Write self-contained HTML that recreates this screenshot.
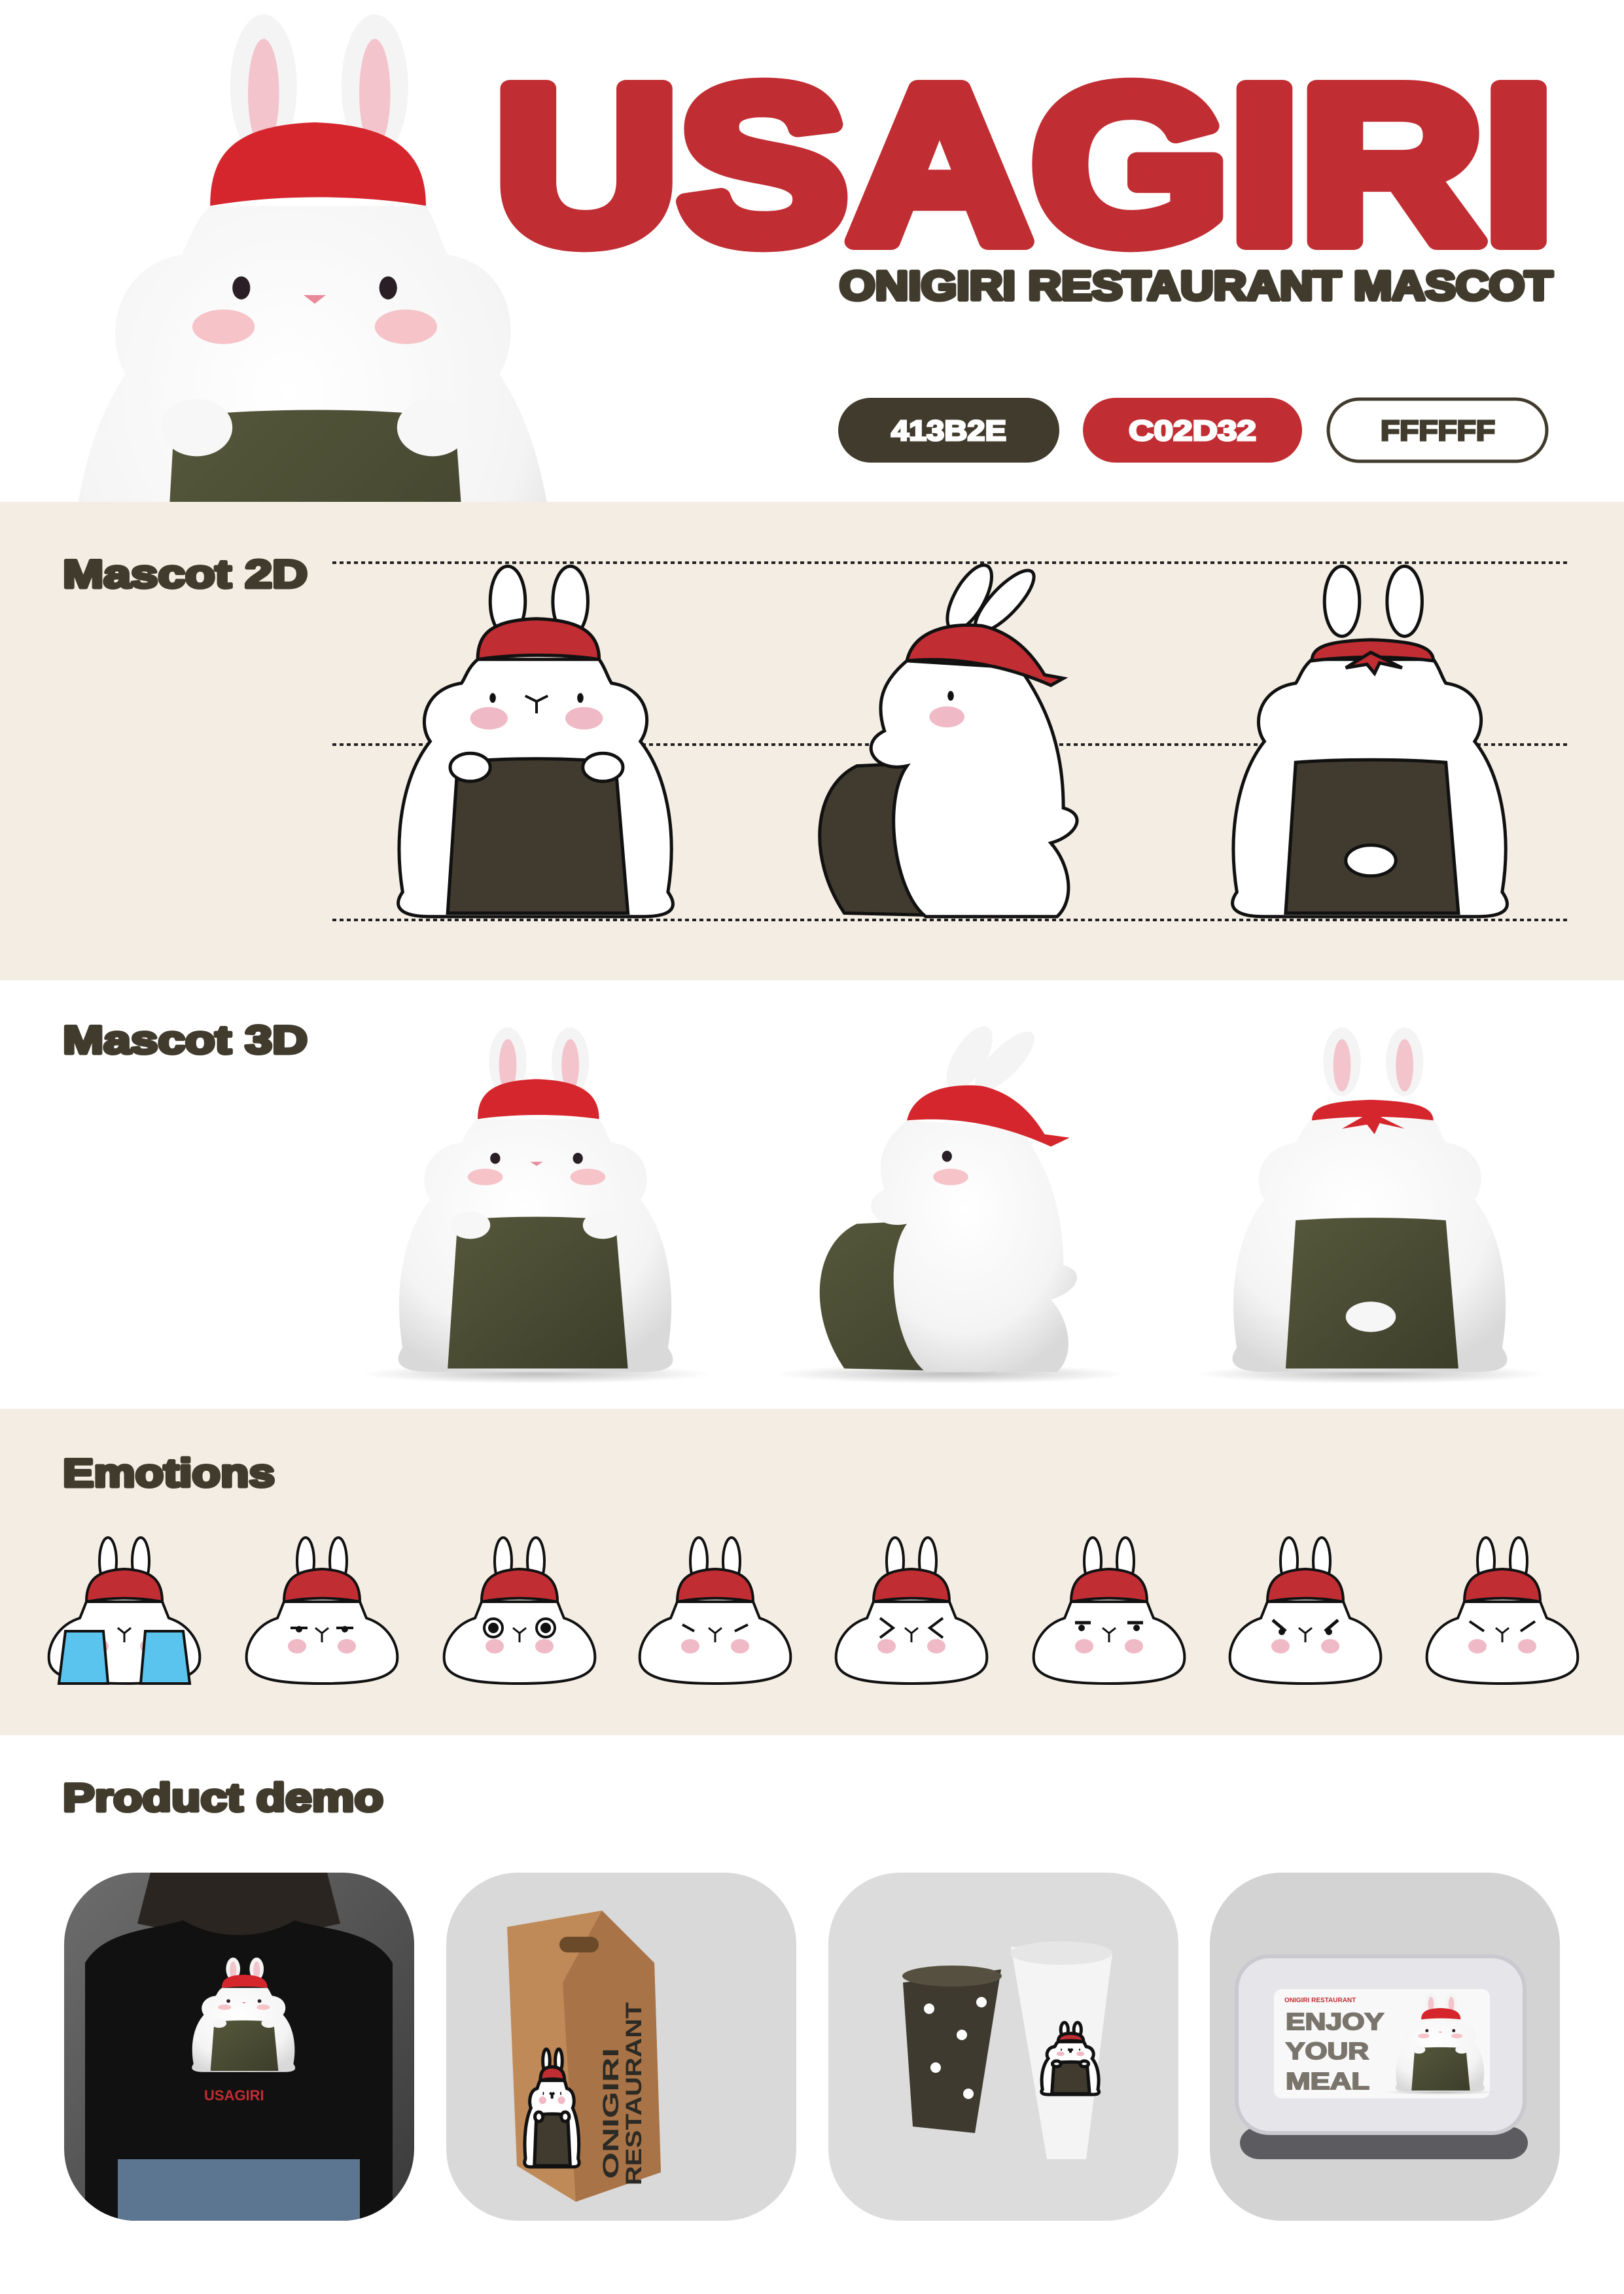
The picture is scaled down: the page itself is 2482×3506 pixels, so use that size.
<!DOCTYPE html>
<html><head><meta charset="utf-8"><style>
html,body{margin:0;padding:0;background:#fff}
svg{display:block}
text{font-family:"Liberation Sans",sans-serif;font-weight:bold}
</style></head><body>
<svg width="2482" height="3506" viewBox="0 0 2482 3506" xmlns="http://www.w3.org/2000/svg">
<defs>
<radialGradient id="w3d" cx="45%" cy="35%" r="70%"><stop offset="0" stop-color="#ffffff"/><stop offset="0.7" stop-color="#f4f4f4"/><stop offset="1" stop-color="#d9d9d9"/></radialGradient>
<linearGradient id="nori3d" x1="0" y1="0" x2="1" y2="1"><stop offset="0" stop-color="#56583c"/><stop offset="1" stop-color="#3c3e2a"/></linearGradient>
<linearGradient id="photo1" x1="0" y1="0" x2="1" y2="1"><stop offset="0" stop-color="#6d6d6d"/><stop offset="1" stop-color="#3a3a3a"/></linearGradient>
<radialGradient id="shadow" cx="50%" cy="50%" r="50%"><stop offset="0" stop-color="#000" stop-opacity="0.25"/><stop offset="1" stop-color="#000" stop-opacity="0"/></radialGradient>

<g id="front2d" stroke="#111" stroke-width="5">
<ellipse cx="92" cy="55" rx="14" ry="50" fill="#fff" vector-effect="non-scaling-stroke"/>
<ellipse cx="142" cy="55" rx="14" ry="50" fill="#fff" vector-effect="non-scaling-stroke"/>
<path d="M68,138 C60,150 58,165 55,172 C25,180 20,230 30,255 C10,300 0,380 8,470 C0,490 5,505 30,505 L200,505 C225,505 228,490 220,470 C228,380 218,300 198,255 C208,230 205,180 175,172 C172,165 170,150 165,138 Z" fill="#fff" vector-effect="non-scaling-stroke"/>
<path d="M68,138 C68,100 80,82 115,80 C150,82 165,100 165,138 C135,130 98,130 68,138 Z" fill="#c02d32" vector-effect="non-scaling-stroke"/>
<path d="M52,285 C90,278 140,278 178,285 L188,500 L44,500 Z" fill="#403b2e" vector-effect="non-scaling-stroke"/>
<ellipse cx="62" cy="292" rx="16" ry="20" fill="#fff" vector-effect="non-scaling-stroke"/>
<ellipse cx="168" cy="292" rx="16" ry="20" fill="#fff" vector-effect="non-scaling-stroke"/>
<ellipse cx="80" cy="193" rx="2.5" ry="7" fill="#111" stroke="none"/>
<ellipse cx="150" cy="193" rx="2.5" ry="7" fill="#111" stroke="none"/>
<ellipse cx="77" cy="222" rx="15" ry="16" fill="#f0b9c6" stroke="none"/>
<ellipse cx="153" cy="222" rx="15" ry="16" fill="#f0b9c6" stroke="none"/>
<path d="M106,190 L115,198 L124,190 M115,198 L115,215" fill="none" stroke-width="4" vector-effect="non-scaling-stroke"/>
</g>

<g id="back2d" stroke="#111" stroke-width="5">
<ellipse cx="92" cy="55" rx="14" ry="50" fill="#fff" vector-effect="non-scaling-stroke"/>
<ellipse cx="142" cy="55" rx="14" ry="50" fill="#fff" vector-effect="non-scaling-stroke"/>
<path d="M68,138 C60,150 58,165 55,172 C25,180 20,230 30,255 C10,300 0,380 8,470 C0,490 5,505 30,505 L200,505 C225,505 228,490 220,470 C228,380 218,300 198,255 C208,230 205,180 175,172 C172,165 170,150 165,138 Z" fill="#fff" vector-effect="non-scaling-stroke"/>
<path d="M68,140 C68,120 80,112 115,110 C150,112 165,120 165,140 C135,133 98,133 68,140 Z" fill="#c02d32" vector-effect="non-scaling-stroke"/>
<path d="M115,128 L95,150 L112,145 L118,158 L122,143 L140,150 Z" fill="#c02d32" vector-effect="non-scaling-stroke"/>
<path d="M55,285 C90,280 140,280 175,285 L185,500 L47,500 Z" fill="#403b2e" vector-effect="non-scaling-stroke"/>
<ellipse cx="115" cy="425" rx="20" ry="22" fill="#fff" vector-effect="non-scaling-stroke"/>
</g>

<g id="side2d" stroke="#111" stroke-width="5">
<ellipse cx="130" cy="50" rx="13" ry="48" fill="#fff" transform="rotate(15 130 50)" vector-effect="non-scaling-stroke"/>
<ellipse cx="158" cy="55" rx="13" ry="48" fill="#fff" transform="rotate(25 158 55)" vector-effect="non-scaling-stroke"/>
<path d="M30,500 C0,420 5,320 40,290 L160,280 C185,350 185,460 150,505 Z" fill="#403b2e" vector-effect="non-scaling-stroke"/>
<path d="M80,140 C60,170 55,200 62,240 C40,260 55,300 80,290 C60,340 70,470 95,505 L200,505 C215,480 210,430 195,400 C215,390 225,360 205,350 C205,260 190,200 170,150 Z" fill="#fff" vector-effect="non-scaling-stroke"/>
<path d="M80,140 C85,100 110,85 140,90 C165,100 180,130 190,160 L205,165 L195,175 C150,140 110,135 80,140 Z" fill="#c02d32" vector-effect="non-scaling-stroke"/>
<ellipse cx="115" cy="190" rx="2.5" ry="7" fill="#111" stroke="none"/>
<ellipse cx="112" cy="220" rx="14" ry="15" fill="#f0b9c6" stroke="none"/>
</g>

<g id="front3d">
<ellipse cx="115" cy="508" rx="140" ry="14" fill="url(#shadow)"/>
<ellipse cx="92" cy="55" rx="15" ry="50" fill="#f4f4f4"/><ellipse cx="92" cy="60" rx="7" ry="38" fill="#f3c4cc"/>
<ellipse cx="142" cy="55" rx="15" ry="50" fill="#f4f4f4"/><ellipse cx="142" cy="60" rx="7" ry="38" fill="#f3c4cc"/>
<path d="M68,138 C60,150 58,165 55,172 C25,180 20,230 30,255 C10,300 0,380 8,470 C0,490 5,505 30,505 L200,505 C225,505 228,490 220,470 C228,380 218,300 198,255 C208,230 205,180 175,172 C172,165 170,150 165,138 Z" fill="url(#w3d)"/>
<path d="M68,138 C68,100 80,82 115,80 C150,82 165,100 165,138 C135,130 98,130 68,138 Z" fill="#d4262c"/>
<path d="M52,285 C90,278 140,278 178,285 L188,500 L44,500 Z" fill="url(#nori3d)"/>
<ellipse cx="62" cy="292" rx="16" ry="20" fill="#f7f7f7"/>
<ellipse cx="168" cy="292" rx="16" ry="20" fill="#f7f7f7"/>
<ellipse cx="82" cy="195" rx="4" ry="8" fill="#2a1f24"/>
<ellipse cx="148" cy="195" rx="4" ry="8" fill="#2a1f24"/>
<ellipse cx="74" cy="222" rx="14" ry="12" fill="#f5c3c8"/>
<ellipse cx="156" cy="222" rx="14" ry="12" fill="#f5c3c8"/>
<path d="M110,200 L120,200 L115,206 Z" fill="#e88a9a"/>
</g>

<g id="back3d">
<ellipse cx="115" cy="508" rx="140" ry="14" fill="url(#shadow)"/>
<ellipse cx="92" cy="55" rx="15" ry="50" fill="#f4f4f4"/><ellipse cx="92" cy="60" rx="7" ry="38" fill="#f3c4cc"/>
<ellipse cx="142" cy="55" rx="15" ry="50" fill="#f4f4f4"/><ellipse cx="142" cy="60" rx="7" ry="38" fill="#f3c4cc"/>
<path d="M68,138 C60,150 58,165 55,172 C25,180 20,230 30,255 C10,300 0,380 8,470 C0,490 5,505 30,505 L200,505 C225,505 228,490 220,470 C228,380 218,300 198,255 C208,230 205,180 175,172 C172,165 170,150 165,138 Z" fill="url(#w3d)"/>
<path d="M68,140 C68,120 80,112 115,110 C150,112 165,120 165,140 C135,133 98,133 68,140 Z" fill="#d4262c"/>
<path d="M115,128 L92,152 L112,146 L118,160 L122,144 L142,152 Z" fill="#d4262c"/>
<path d="M55,285 C90,280 140,280 175,285 L185,500 L47,500 Z" fill="url(#nori3d)"/>
<ellipse cx="115" cy="425" rx="20" ry="22" fill="#f6f6f6"/>
</g>

<g id="side3d">
<ellipse cx="115" cy="508" rx="140" ry="14" fill="url(#shadow)"/>
<ellipse cx="130" cy="50" rx="14" ry="48" fill="#f4f4f4" transform="rotate(15 130 50)"/>
<ellipse cx="158" cy="55" rx="14" ry="48" fill="#f4f4f4" transform="rotate(25 158 55)"/>
<path d="M30,500 C0,420 5,320 40,290 L160,280 C185,350 185,460 150,505 Z" fill="url(#nori3d)"/>
<path d="M80,140 C60,170 55,200 62,240 C40,260 55,300 80,290 C60,340 70,470 95,505 L200,505 C215,480 210,430 195,400 C215,390 225,360 205,350 C205,260 190,200 170,150 Z" fill="url(#w3d)"/>
<path d="M80,140 C85,100 110,85 140,90 C165,100 180,130 190,160 L210,165 L195,178 C150,140 110,135 80,140 Z" fill="#d4262c"/>
<ellipse cx="112" cy="192" rx="4" ry="8" fill="#2a1f24"/>
<ellipse cx="115" cy="222" rx="14" ry="12" fill="#f5c3c8"/>
</g>

<g id="face" stroke="#111" stroke-width="4">
<ellipse cx="95" cy="38" rx="13" ry="36" fill="#fff"/>
<ellipse cx="145" cy="38" rx="13" ry="36" fill="#fff"/>
<path d="M62,100 C58,110 55,118 52,125 C20,135 2,165 5,190 C8,220 60,225 120,225 C180,225 232,220 235,190 C238,165 220,135 188,125 C185,118 182,110 178,100 Z" fill="#fff"/>
<path d="M62,100 C62,65 80,52 120,50 C160,52 178,65 178,100 C140,93 100,93 62,100 Z" fill="#c02d32"/>
<ellipse cx="82" cy="168" rx="14" ry="11" fill="#f0b9c6" stroke="none"/>
<ellipse cx="158" cy="168" rx="14" ry="11" fill="#f0b9c6" stroke="none"/>
<path d="M110,140 L120,148 L130,140 M120,148 L120,162" fill="none" stroke-width="3"/>
</g>
<clipPath id="c1"><rect x="98" y="2862" width="535" height="532" rx="110"/></clipPath>
<clipPath id="c2"><rect x="682" y="2862" width="535" height="532" rx="110"/></clipPath>
<clipPath id="c3"><rect x="1266" y="2862" width="535" height="532" rx="110"/></clipPath>
<clipPath id="c4"><rect x="1849" y="2862" width="535" height="532" rx="110"/></clipPath>
</defs>

<use href="#front3d" transform="translate(90,11) scale(3.4,2.2)"/>

<rect x="0" y="767" width="2482" height="731" fill="#f4ede3"/>
<rect x="0" y="1498" width="2482" height="655" fill="#ffffff"/>
<rect x="0" y="2153" width="2482" height="499" fill="#f4ede3"/>

<text x="756" y="369" font-size="340" fill="#c02d32" stroke="#c02d32" stroke-width="26" stroke-linejoin="round" textLength="1619" lengthAdjust="spacingAndGlyphs">USAGIRI</text>
<text x="1283" y="458" font-size="62" fill="#413b2e" stroke="#413b2e" stroke-width="6" stroke-linejoin="round" textLength="1090" lengthAdjust="spacingAndGlyphs">ONIGIRI RESTAURANT MASCOT</text>

<rect x="1281" y="608" width="338" height="99" rx="49.5" fill="#413b2e"/>
<text x="1362" y="673" font-size="44" fill="#fff" stroke="#fff" stroke-width="3" textLength="176" lengthAdjust="spacingAndGlyphs">413B2E</text>
<rect x="1655" y="608" width="335" height="99" rx="49.5" fill="#c02d32"/>
<text x="1725" y="673" font-size="44" fill="#fff" stroke="#fff" stroke-width="3" textLength="195" lengthAdjust="spacingAndGlyphs">C02D32</text>
<rect x="2030" y="610" width="334" height="95" rx="47.5" fill="#fff" stroke="#413b2e" stroke-width="5"/>
<text x="2110" y="673" font-size="44" fill="#413b2e" stroke="#413b2e" stroke-width="3" textLength="175" lengthAdjust="spacingAndGlyphs">FFFFFF</text>

<g fill="#413b2e" stroke="#413b2e" stroke-width="5" stroke-linejoin="round">
<text x="96" y="898" font-size="60" textLength="374" lengthAdjust="spacingAndGlyphs">Mascot 2D</text>
<text x="96" y="1610" font-size="60" textLength="374" lengthAdjust="spacingAndGlyphs">Mascot 3D</text>
<text x="96" y="2272" font-size="60" textLength="324" lengthAdjust="spacingAndGlyphs">Emotions</text>
<text x="96" y="2768" font-size="60" textLength="490" lengthAdjust="spacingAndGlyphs">Product demo</text>
</g>

<g stroke="#222" stroke-width="4" stroke-dasharray="6,5">
<line x1="508" y1="860" x2="2400" y2="860"/>
<line x1="508" y1="1138" x2="2400" y2="1138"/>
<line x1="508" y1="1406" x2="2400" y2="1406"/>
</g>

<use href="#front2d" transform="translate(600,860) scale(1.913,1.071)"/>
<use href="#side2d" transform="translate(1233,860) scale(1.913,1.071)"/>
<use href="#back2d" transform="translate(1875,860) scale(1.913,1.071)"/>

<use href="#front3d" transform="translate(600,1565) scale(1.913,1.053)"/>
<use href="#side3d" transform="translate(1233,1565) scale(1.913,1.053)"/>
<use href="#back3d" transform="translate(1875,1565) scale(1.913,1.053)"/>

<g transform="translate(70,2348)"><use href="#face"/>
<path d="M30,145 L88,145 L95,225 L20,225 Z M152,145 L210,145 L220,225 L145,225 Z" fill="#5bc4ee" stroke="#111" stroke-width="4"/>
<path d="M110,140 L120,148 L130,140 M120,148 L120,162" fill="none" stroke="#111" stroke-width="3"/></g>
<g transform="translate(372,2348)"><use href="#face"/>
<path d="M72,140 L98,140 M142,140 L168,140" stroke="#111" stroke-width="4"/><circle cx="85" cy="142" r="5" fill="#111"/><circle cx="155" cy="142" r="5" fill="#111"/></g>
<g transform="translate(674,2348)"><use href="#face"/>
<circle cx="80" cy="140" r="14" fill="#fff" stroke="#111" stroke-width="4"/><circle cx="80" cy="140" r="8" fill="#111"/>
<circle cx="160" cy="140" r="14" fill="#fff" stroke="#111" stroke-width="4"/><circle cx="160" cy="140" r="8" fill="#111"/></g>
<g transform="translate(973,2348)"><use href="#face"/>
<path d="M70,135 L88,145 M150,145 L170,135" stroke="#111" stroke-width="4" fill="none"/></g>
<g transform="translate(1273,2348)"><use href="#face"/>
<path d="M72,125 L92,140 L72,155 M168,125 L148,140 L168,155" stroke="#111" stroke-width="4" fill="none"/></g>
<g transform="translate(1575,2348)"><use href="#face"/>
<path d="M68,132 L92,132 M148,132 L172,132" stroke="#111" stroke-width="5"/><circle cx="78" cy="140" r="5" fill="#111"/><circle cx="162" cy="140" r="5" fill="#111"/></g>
<g transform="translate(1875,2348)"><use href="#face"/>
<path d="M70,128 L90,145 M170,128 L150,145" stroke="#111" stroke-width="5"/><circle cx="84" cy="146" r="5" fill="#111"/><circle cx="156" cy="146" r="5" fill="#111"/></g>
<g transform="translate(2176,2348)"><use href="#face"/>
<path d="M70,130 L92,145 M170,130 L148,145" stroke="#111" stroke-width="4" fill="none"/></g>

<g clip-path="url(#c1)">
<rect x="98" y="2862" width="535" height="532" fill="url(#photo1)"/>
<path d="M230,2862 L500,2862 L520,2940 L470,2950 C420,2970 310,2970 260,2950 L210,2940 Z" fill="#2a2520"/>
<path d="M130,3000 C160,2950 230,2950 280,2935 C330,2965 400,2965 450,2935 C500,2950 570,2950 600,3000 L600,3394 L130,3394 Z" fill="#111"/>
<rect x="180" y="3300" width="370" height="94" fill="#5c7590"/>
<use href="#front3d" transform="translate(290,2990) scale(0.72,0.35)"/>
<text x="312" y="3210" font-size="22" fill="#c02d32">USAGIRI</text>
</g>
<g clip-path="url(#c2)">
<rect x="682" y="2862" width="535" height="532" fill="#d9d9d9"/>
<path d="M775,2945 L920,2920 L1000,3000 L1010,3320 L880,3365 L790,3310 Z" fill="#c08a58"/>
<path d="M920,2920 L1000,3000 L1010,3320 L880,3365 L860,3030 Z" fill="#a87346"/>
<rect x="855" y="2960" width="60" height="24" rx="12" fill="#6b4a2a"/>
<use href="#front2d" transform="translate(800,3130) scale(0.38,0.36)"/>
<text transform="translate(945,3330) rotate(-90)" font-size="34" fill="#2c2a24" textLength="200" lengthAdjust="spacingAndGlyphs">ONIGIRI</text>
<text transform="translate(980,3340) rotate(-90)" font-size="34" fill="#2c2a24" textLength="280" lengthAdjust="spacingAndGlyphs">RESTAURANT</text>
</g>
<g clip-path="url(#c3)">
<rect x="1266" y="2862" width="535" height="532" fill="#dcdcdc"/>
<path d="M1380,3030 L1530,3010 L1490,3260 L1395,3250 Z" fill="#3e3a30"/>
<path d="M1545,2975 L1700,2985 L1660,3300 L1600,3300 Z" fill="#f4f4f4"/>
<ellipse cx="1622" cy="2985" rx="78" ry="18" fill="#e6e6e6"/>
<ellipse cx="1455" cy="3020" rx="76" ry="16" fill="#55503f"/>
<g fill="#fff"><circle cx="1420" cy="3070" r="8"/><circle cx="1470" cy="3110" r="8"/><circle cx="1430" cy="3160" r="8"/><circle cx="1480" cy="3200" r="8"/><circle cx="1500" cy="3060" r="8"/></g>
<use href="#front2d" transform="translate(1590,3090) scale(0.4,0.22)"/>
</g>
<g clip-path="url(#c4)">
<rect x="1849" y="2862" width="535" height="532" fill="#d3d3d3"/>
<rect x="1895" y="3250" width="440" height="50" rx="30" fill="#3f3f44" opacity="0.8"/>
<rect x="1890" y="2990" width="440" height="270" rx="50" fill="#e6e6ea" stroke="#c9c9cf" stroke-width="6"/>
<rect x="1947" y="3040" width="330" height="167" rx="12" fill="#f8f8f8"/>
<text x="1963" y="3060" font-size="10" fill="#c02d32">ONIGIRI RESTAURANT</text>
<text x="1965" y="3102" font-size="36" fill="#7a756c" stroke="#7a756c" stroke-width="2" textLength="150" lengthAdjust="spacingAndGlyphs">ENJOY</text>
<text x="1965" y="3147" font-size="36" fill="#7a756c" stroke="#7a756c" stroke-width="2" textLength="127" lengthAdjust="spacingAndGlyphs">YOUR</text>
<text x="1965" y="3193" font-size="36" fill="#7a756c" stroke="#7a756c" stroke-width="2" textLength="128" lengthAdjust="spacingAndGlyphs">MEAL</text>
<use href="#front3d" transform="translate(2130,3045) scale(0.62,0.3)"/>
</g>
</svg>
</body></html>
